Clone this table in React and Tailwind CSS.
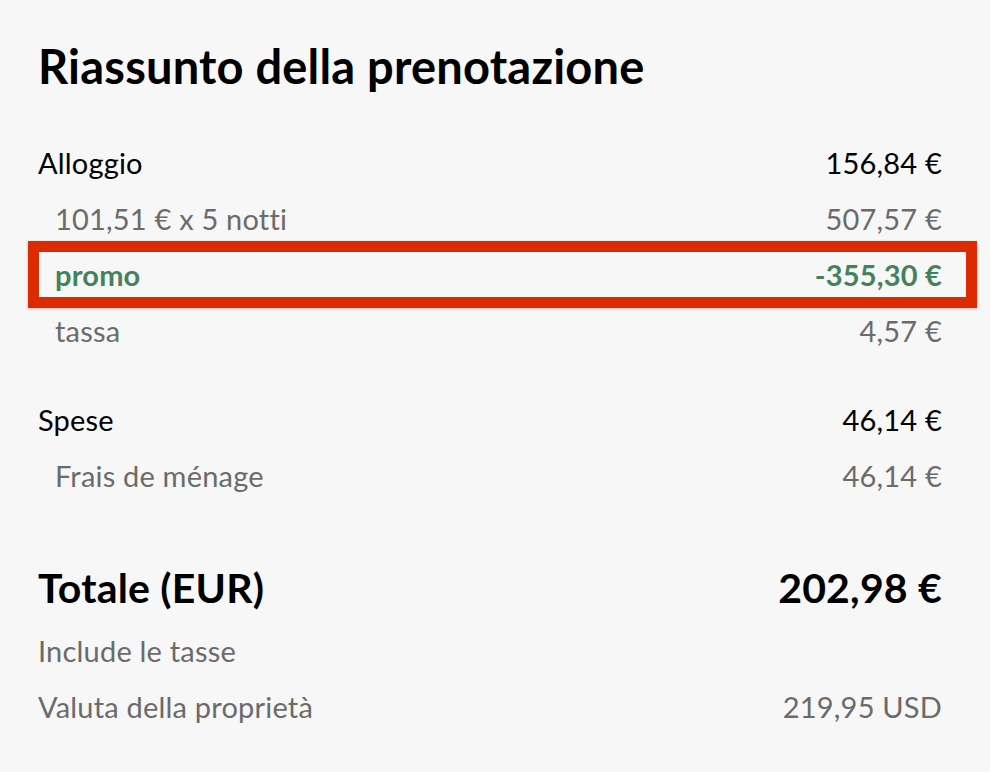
export default function App() {
  const font = { fontFamily: '"Lato", "Noto Sans", sans-serif' };
  const Row = ({ label, value, sub, green, flush }) => {
    const color = green ? "text-[#43825a] font-bold" : sub ? "text-[#6b6b6b]" : "text-black";
    return (
      <div className="flex h-[56px] items-center justify-between">
        <span className={`${sub && !flush ? "pl-[17px]" : ""} ${color}`}>{label}</span>
        <span className={color}>{value}</span>
      </div>
    );
  };
  return (
    <div className="min-h-[772px] w-[990px] bg-[#f7f7f7] pl-[38px] pr-[48px] pt-[38px] text-[29px] tracking-[0.2px]" style={font}>
      <h1 className="text-[47px] font-bold leading-[56px] tracking-[0.2px] text-black">Riassunto della prenotazione</h1>
      <div className="mt-[41px]">
        <Row label="Alloggio" value="156,84 €" />
        <Row label="101,51 € x 5 notti" value="507,57 €" sub />
        <div className="relative">
          <Row label="promo" value="-355,30 €" sub green />
          <div className="pointer-events-none absolute -top-[6px] -bottom-[5px] -left-[10px] -right-[35px] border-[11px] border-[#dc2b00] shadow-[0_1px_3px_rgba(0,0,0,0.25)]" />
        </div>
        <Row label="tassa" value="4,57 €" sub />
      </div>
      <div className="mt-[33px]">
        <Row label="Spese" value="46,14 €" />
        <Row label="Frais de ménage" value="46,14 €" sub />
      </div>
      <div className="mt-[56px] flex h-[56px] items-center justify-between text-[41px] font-bold text-black">
        <span>Totale (EUR)</span>
        <span>202,98 €</span>
      </div>
      <div className="mt-[7px]">
        <Row label="Include le tasse" value="" sub flush />
        <Row label="Valuta della proprietà" value="219,95 USD" sub flush />
      </div>
    </div>
  );
}
